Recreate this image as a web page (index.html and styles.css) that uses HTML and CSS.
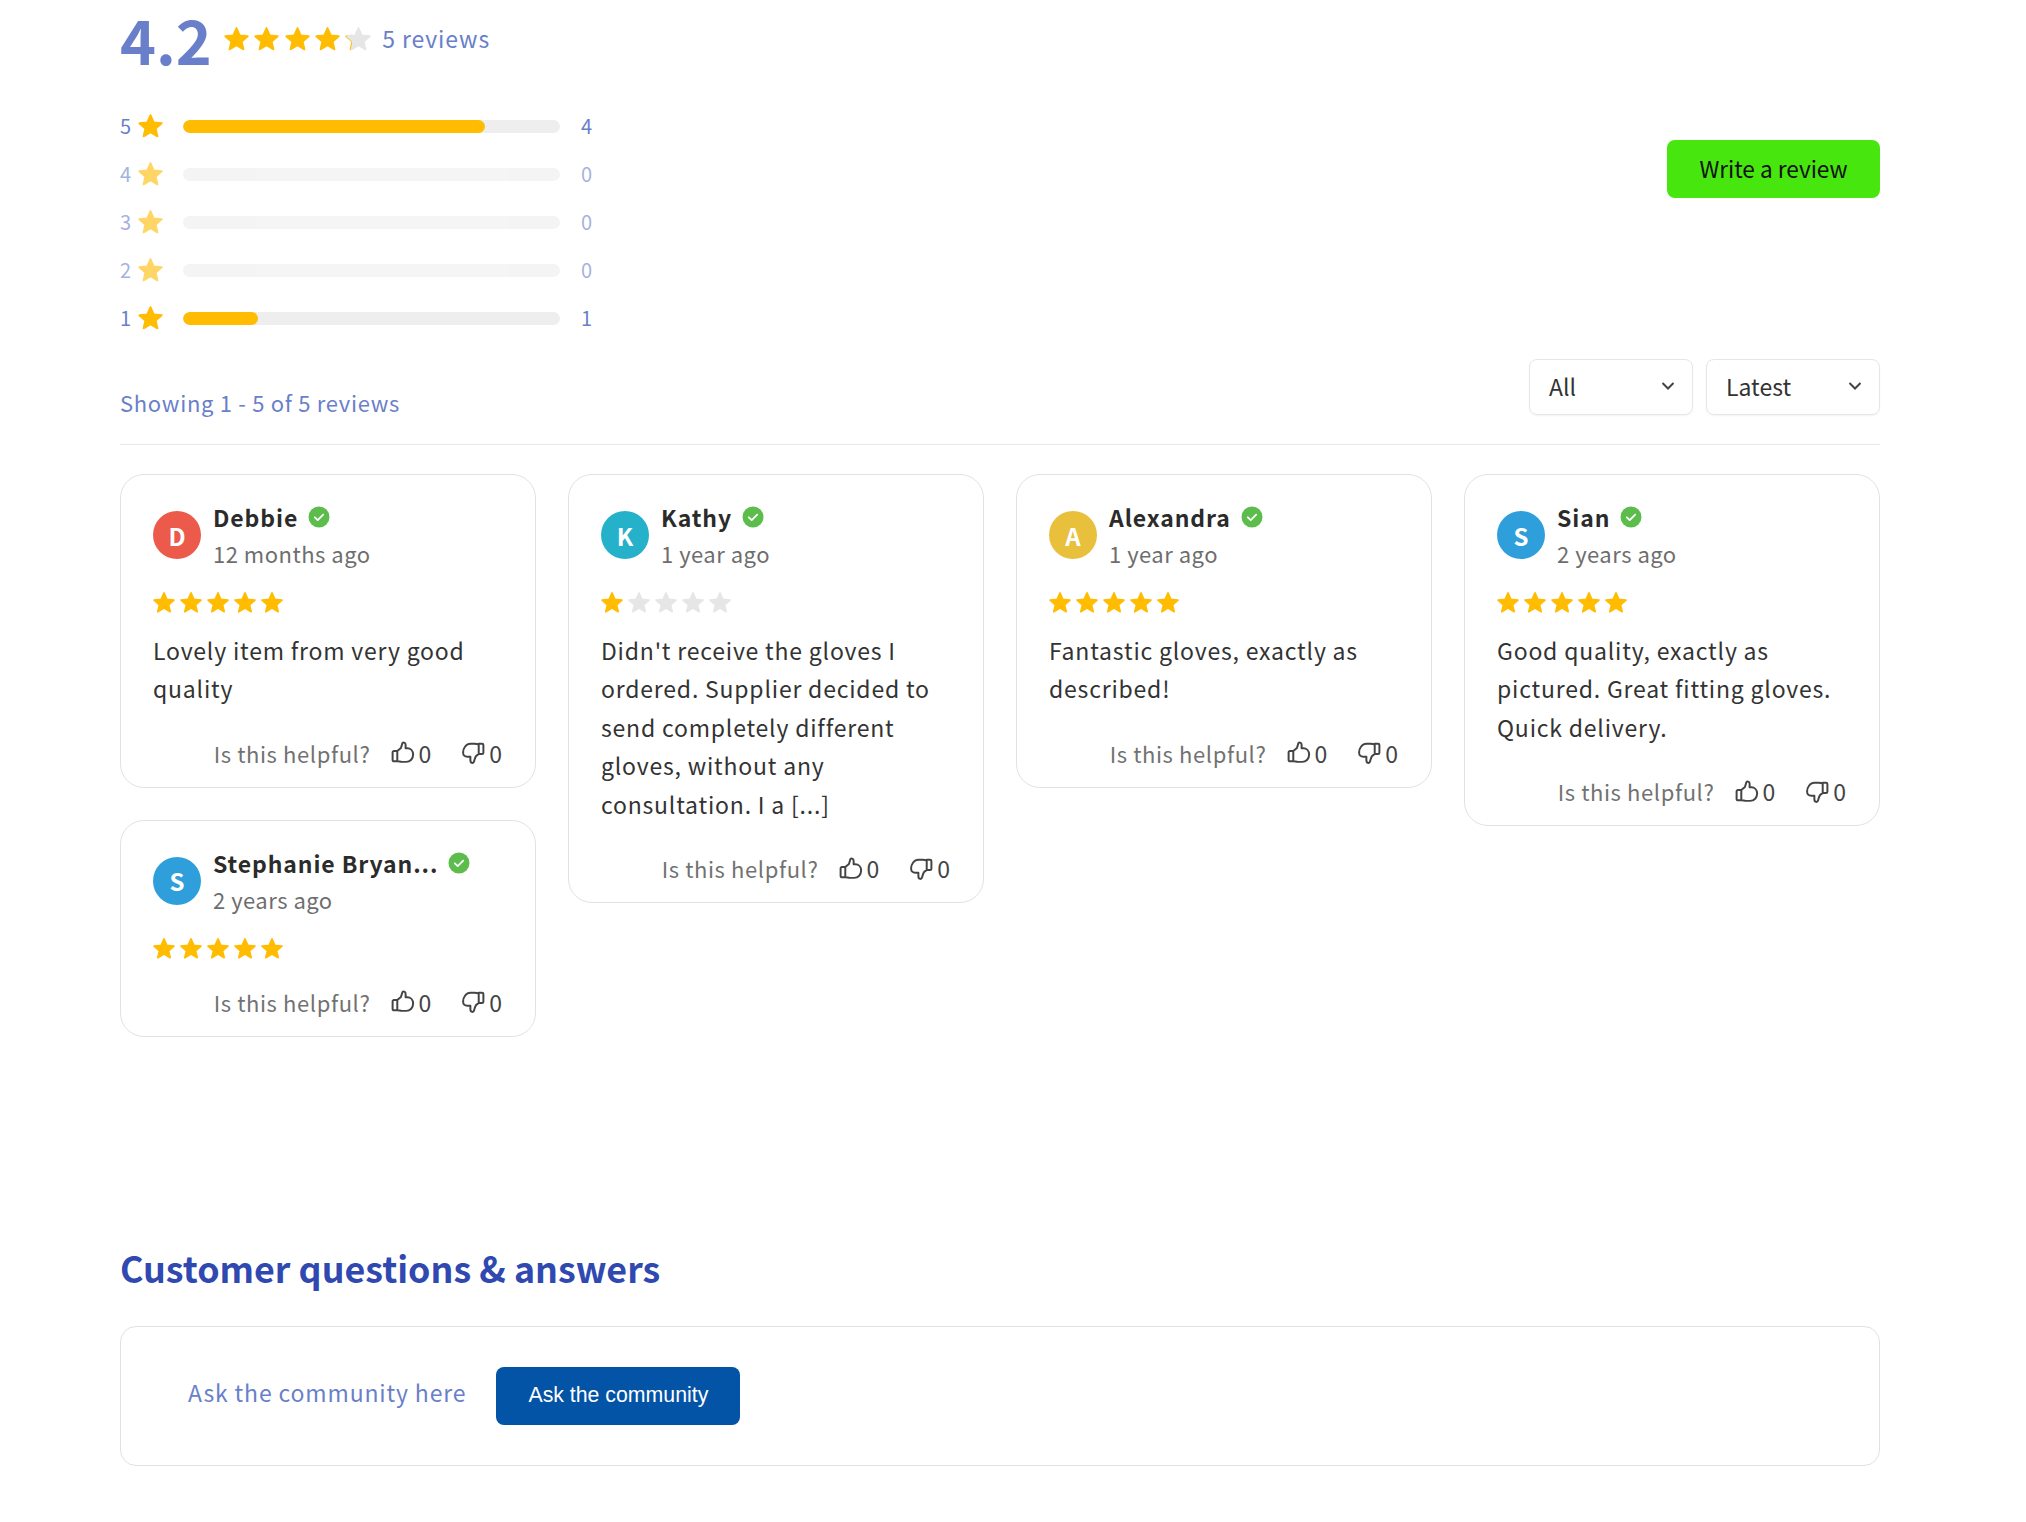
FILE: index.html
```html
<!DOCTYPE html>
<html lang="en">
<head>
<meta charset="utf-8">
<title>Reviews</title>
<link rel="stylesheet" href="styles.css">
</head>
<body>
<svg class="defs" width="0" height="0" aria-hidden="true">
  <defs>
    <symbol id="star" viewBox="0 0 24 24"><path d="M12 1.800l2.900 6.600 7.100.7-5.400 4.700 1.600 7-6.200-3.700-6.200 3.700 1.600-7L2 9.100l7.100-.7z" fill="currentColor" stroke="currentColor" stroke-width="1.600" stroke-linejoin="round"/></symbol>
    <symbol id="check" viewBox="0 0 22 22"><circle cx="11" cy="11" r="10.500" fill="#5cbd4c"/><path d="M6.800 11.300l2.900 2.800 5.500-5.400" fill="none" stroke="#fff" stroke-width="1.800" stroke-linecap="round" stroke-linejoin="round"/></symbol>
    <symbol id="up" viewBox="0 0 24 24"><path d="M7 10.500h-3.200a1.300 1.300 0 0 0-1.300 1.300v7.400a1.300 1.300 0 0 0 1.300 1.300h3.200zM7 10.500l3.500-2.800 1.300-4.400c.5-1.500 3.200-1 3.200 1.200v3.500h1.500c3.500 0 5.700 2.800 5.700 6 0 3.800-2.700 7-6.700 7h-4c-1.800 0-2.700-.6-4.500-.6z" fill="none" stroke="currentColor" stroke-width="1.900" stroke-linejoin="round"/></symbol>
    <symbol id="down" viewBox="0 0 24 24"><path d="M17 13.500h3.200a1.300 1.300 0 0 0 1.300-1.300V4.800a1.300 1.300 0 0 0-1.300-1.300H17zM17 13.500c-2 .8-3.500 2.800-4 5.400-.3 2-.8 3.100-2 3.100-1.500 0-2-1.300-2-2.500v-3.500H6c-2.500 0-4-1.500-4-4 0-4 3-8.500 7-8.500h4c1.800 0 2.500.5 4 .5z" fill="none" stroke="currentColor" stroke-width="1.900" stroke-linejoin="round"/></symbol>
    <symbol id="chev" viewBox="0 0 14 10"><path d="M1.500 2l5.500 5.500L12.500 2" fill="none" stroke="currentColor" stroke-width="2"/></symbol>
  </defs>
</svg>
<main class="page">
  <section class="score-row">
    <span class="score">4.2</span>
    <span class="score-stars">
      <svg class="star-lg"><use href="#star"/></svg>
      <svg class="star-lg"><use href="#star"/></svg>
      <svg class="star-lg"><use href="#star"/></svg>
      <svg class="star-lg"><use href="#star"/></svg>
      <span class="star-partial">
        <span class="star-clip"><svg class="star-lg"><use href="#star"/></svg></span>
        <svg class="star-lg star-empty star-over"><use href="#star"/></svg>
      </span>
    </span>
    <span class="score-count">5 reviews</span>
  </section>

  <section class="summary">
    <div class="bars">
      <div class="bar-row"><span class="bar-label">5</span><svg class="star-md"><use href="#star"/></svg><span class="track"><span class="fill" style="width:80%"></span></span><span class="bar-count">4</span></div>
      <div class="bar-row is-empty"><span class="bar-label">4</span><svg class="star-md"><use href="#star"/></svg><span class="track"></span><span class="bar-count">0</span></div>
      <div class="bar-row is-empty"><span class="bar-label">3</span><svg class="star-md"><use href="#star"/></svg><span class="track"></span><span class="bar-count">0</span></div>
      <div class="bar-row is-empty"><span class="bar-label">2</span><svg class="star-md"><use href="#star"/></svg><span class="track"></span><span class="bar-count">0</span></div>
      <div class="bar-row"><span class="bar-label">1</span><svg class="star-md"><use href="#star"/></svg><span class="track"><span class="fill" style="width:20%"></span></span><span class="bar-count">1</span></div>
    </div>
    <button class="write-btn" type="button">Write a review</button>
  </section>

  <section class="toolbar">
    <span class="showing">Showing 1 - 5 of 5 reviews</span>
    <div class="selects">
      <div class="select select-all"><span>All</span><svg class="chev"><use href="#chev"/></svg></div>
      <div class="select select-latest"><span>Latest</span><svg class="chev"><use href="#chev"/></svg></div>
    </div>
  </section>

  <section class="grid">
    <div class="col">
      <article class="card">
        <header class="card-head"><span class="avatar av-red">D</span><div class="who"><div class="name-row"><span class="name">Debbie</span><svg class="badge"><use href="#check"/></svg></div><div class="date">12 months ago</div></div></header>
        <div class="stars"><svg class="star-sm"><use href="#star"/></svg><svg class="star-sm"><use href="#star"/></svg><svg class="star-sm"><use href="#star"/></svg><svg class="star-sm"><use href="#star"/></svg><svg class="star-sm"><use href="#star"/></svg></div>
        <p class="body">Lovely item from very good quality</p>
        <footer class="helpful"><span class="helpful-q">Is this helpful?</span><span class="vote"><svg class="thumb"><use href="#up"/></svg>0</span><span class="vote"><svg class="thumb"><use href="#down"/></svg>0</span></footer>
      </article>
      <article class="card">
        <header class="card-head"><span class="avatar av-blue">S</span><div class="who"><div class="name-row"><span class="name">Stephanie Bryan...</span><svg class="badge"><use href="#check"/></svg></div><div class="date">2 years ago</div></div></header>
        <div class="stars"><svg class="star-sm"><use href="#star"/></svg><svg class="star-sm"><use href="#star"/></svg><svg class="star-sm"><use href="#star"/></svg><svg class="star-sm"><use href="#star"/></svg><svg class="star-sm"><use href="#star"/></svg></div>
        <footer class="helpful helpful-tight"><span class="helpful-q">Is this helpful?</span><span class="vote"><svg class="thumb"><use href="#up"/></svg>0</span><span class="vote"><svg class="thumb"><use href="#down"/></svg>0</span></footer>
      </article>
    </div>
    <div class="col">
      <article class="card">
        <header class="card-head"><span class="avatar av-teal">K</span><div class="who"><div class="name-row"><span class="name">Kathy</span><svg class="badge"><use href="#check"/></svg></div><div class="date">1 year ago</div></div></header>
        <div class="stars"><svg class="star-sm"><use href="#star"/></svg><svg class="star-sm star-empty"><use href="#star"/></svg><svg class="star-sm star-empty"><use href="#star"/></svg><svg class="star-sm star-empty"><use href="#star"/></svg><svg class="star-sm star-empty"><use href="#star"/></svg></div>
        <p class="body">Didn't receive the gloves I ordered. Supplier decided to send completely different gloves, without any consultation. I a [...]</p>
        <footer class="helpful"><span class="helpful-q">Is this helpful?</span><span class="vote"><svg class="thumb"><use href="#up"/></svg>0</span><span class="vote"><svg class="thumb"><use href="#down"/></svg>0</span></footer>
      </article>
    </div>
    <div class="col">
      <article class="card">
        <header class="card-head"><span class="avatar av-yellow">A</span><div class="who"><div class="name-row"><span class="name">Alexandra</span><svg class="badge"><use href="#check"/></svg></div><div class="date">1 year ago</div></div></header>
        <div class="stars"><svg class="star-sm"><use href="#star"/></svg><svg class="star-sm"><use href="#star"/></svg><svg class="star-sm"><use href="#star"/></svg><svg class="star-sm"><use href="#star"/></svg><svg class="star-sm"><use href="#star"/></svg></div>
        <p class="body">Fantastic gloves, exactly as described!</p>
        <footer class="helpful"><span class="helpful-q">Is this helpful?</span><span class="vote"><svg class="thumb"><use href="#up"/></svg>0</span><span class="vote"><svg class="thumb"><use href="#down"/></svg>0</span></footer>
      </article>
    </div>
    <div class="col">
      <article class="card">
        <header class="card-head"><span class="avatar av-blue">S</span><div class="who"><div class="name-row"><span class="name">Sian</span><svg class="badge"><use href="#check"/></svg></div><div class="date">2 years ago</div></div></header>
        <div class="stars"><svg class="star-sm"><use href="#star"/></svg><svg class="star-sm"><use href="#star"/></svg><svg class="star-sm"><use href="#star"/></svg><svg class="star-sm"><use href="#star"/></svg><svg class="star-sm"><use href="#star"/></svg></div>
        <p class="body">Good quality, exactly as pictured. Great fitting gloves. Quick delivery.</p>
        <footer class="helpful"><span class="helpful-q">Is this helpful?</span><span class="vote"><svg class="thumb"><use href="#up"/></svg>0</span><span class="vote"><svg class="thumb"><use href="#down"/></svg>0</span></footer>
      </article>
    </div>
  </section>

  <section class="qa">
    <h2 class="qa-title">Customer questions &amp; answers</h2>
    <div class="qa-box">
      <span class="qa-text">Ask the community here</span>
      <button class="ask-btn" type="button">Ask the community</button>
    </div>
  </section>
</main>
</body>
</html>
```
FILE: styles.css
```css
* { box-sizing: border-box; }
html, body { margin: 0; padding: 0; background: #fff; }
body { font-family: "Noto Sans CJK JP", "Noto Sans", sans-serif; color: #333; height: 1522px; overflow: hidden; }
.defs { position: absolute; }
svg { display: block; flex: none; }
.page { padding: 0 146px 0 120px; }

.score-row { display: flex; align-items: center; height: 78px; }
.score { font-size: 61px; font-weight: 700; color: #6a7fc9; line-height: 78px; width: 103px; }
.score-stars { display: flex; gap: 3.300px; color: #ffbc00; }
.star-lg { width: 27px; height: 27px; }
.star-empty { color: #e6e6e6; }
.star-partial { position: relative; width: 27px; height: 27px; }
.star-clip { position: absolute; inset: 0 auto 0 0; width: 8px; overflow: hidden; }
.star-over { position: absolute; left: 1px; top: 0; }
.score-count { margin-left: 11px; padding-bottom: 2px; font-size: 23px; letter-spacing: .9px; color: #6a7fc9; }

.summary { display: flex; justify-content: space-between; align-items: flex-start; margin-top: 36px; }
.bars { display: flex; flex-direction: column; gap: 24px; width: 490px; }
.bar-row { display: flex; align-items: center; height: 24px; color: #6a7fc9; }
.bar-row.is-empty { opacity: .6; }
.bar-label { width: 17px; font-size: 20px; line-height: 24px; }
.star-md { width: 27px; height: 27px; color: #ffbc00; }
.track { display: block; flex: none; width: 377px; height: 13px; margin-left: 19px; background: #eee; border-radius: 7px; overflow: hidden; }
.fill { display: block; height: 100%; background: #ffbc00; border-radius: 7px; }
.bar-count { margin-left: 21px; font-size: 20px; line-height: 24px; }
.write-btn { width: 213px; height: 58px; margin-top: 26px; padding: 0 0 2px; border: 0; border-radius: 8px; background: #46e60e; color: #111; font: 400 22.600px "Noto Sans CJK JP", sans-serif; }

.toolbar { display: flex; justify-content: space-between; align-items: flex-end; height: 85px; margin-top: 30px; padding-bottom: 29px; border-bottom: 1px solid #e8e8e8; }
.showing { font-size: 22px; letter-spacing: .7px; color: #6a7fc9; line-height: 32px; margin-bottom: -3px; }
.selects { display: flex; gap: 13px; }
.select { display: flex; justify-content: space-between; align-items: center; height: 56px; padding: 0 17px 2px 19px; border: 1px solid #e6e6e6; border-radius: 8px; box-shadow: 0 1px 2px rgba(0,0,0,.05); font-size: 23px; color: #333; }
.select-all { width: 164px; }
.select-latest { width: 174px; }
.chev { width: 14px; height: 10px; color: #444; }

.grid { display: flex; gap: 32px; margin-top: 29px; align-items: flex-start; }
.col { flex: 1; display: flex; flex-direction: column; gap: 32px; min-width: 0; }
.card { padding: 22px 32px 15px; border: 1px solid #e2e2e2; border-radius: 24px; }
.card-head { display: flex; align-items: center; gap: 12px; }
.avatar { display: flex; align-items: center; justify-content: center; width: 48px; height: 48px; margin-top: 2px; border-radius: 50%; color: #fff; font-size: 24px; font-weight: 700; }
.av-red { background: #eb5a4a; }
.av-teal { background: #24b1c9; }
.av-yellow { background: #e8c03c; }
.av-blue { background: #2f9fdc; }
.name-row { display: flex; align-items: center; gap: 10px; height: 38px; padding-top: 2px; }
.name { font-size: 23px; font-weight: 700; letter-spacing: .9px; color: #2b2b2b; line-height: 38px; }
.badge { width: 22px; height: 22px; }
.date { font-size: 22px; letter-spacing: .5px; color: #6e6e6e; line-height: 36px; }
.stars { display: flex; gap: 3.100px; margin-top: 20px; margin-left: -1px; color: #ffbc00; }
.star-sm { width: 24px; height: 24px; }
.body { margin: 16px 0 0; font-size: 23px; letter-spacing: .8px; line-height: 38.400px; color: #333; }
.helpful { display: flex; justify-content: flex-end; align-items: center; margin-top: 26px; margin-right: 1px; height: 38px; color: #444; }
.helpful-tight { margin-top: 22px; }
.helpful-q { font-size: 22px; letter-spacing: .6px; color: #727272; }
.vote { display: flex; align-items: center; gap: 3px; margin-left: 20px; font-size: 23px; }
.vote + .vote { margin-left: 30px; }
.thumb { width: 25px; height: 25px; color: #444; }

.qa { margin-top: 207px; }
.qa-title { margin: 0; font-size: 35.800px; font-weight: 700; line-height: 46px; color: #2f49b0; }
.qa-box { display: flex; align-items: center; gap: 30px; height: 140px; margin-top: 36px; padding: 0 0 0 67px; border: 1px solid #e2e2e2; border-radius: 16px; }
.qa-text { padding-bottom: 8px; font-size: 23px; letter-spacing: .85px; color: #6a7fc9; }
.ask-btn { width: 244px; height: 58px; border: 0; border-radius: 8px; background: #0353a6; color: #fff; font: 400 21.300px "Liberation Sans", sans-serif; }
```
